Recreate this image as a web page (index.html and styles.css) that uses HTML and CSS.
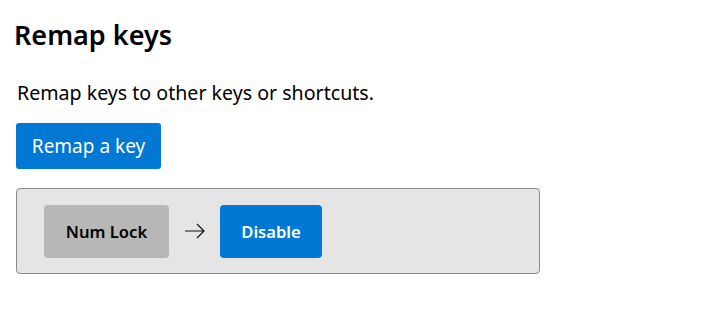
FILE: index.html
```html
<!DOCTYPE html>
<html lang="en">

<head>
    <meta charset="UTF-8">
    <meta name="viewport" content="width=device-width, initial-scale=1.0">
    <title>Remap keys</title>
    <link rel="stylesheet" href="styles.css">
</head>

<body>
    <div class="page">
        <h1 class="title">Remap keys</h1>
        <p class="desc">Remap keys to other keys or shortcuts.</p>
        <button class="btn-primary">Remap a key</button>

        <div class="mapping">
            <div class="key key-from">Num Lock</div>
            <div class="arrow">
                <svg width="22" height="16" viewBox="0 0 22 16">
                    <path d="M1 8 H20 M13 1 L20 8 L13 15" fill="none" stroke="#111" stroke-width="1.2" />
                </svg>
            </div>
            <div class="key key-to">Disable</div>
        </div>
    </div>
</body>

</html>
```

FILE: styles.css
```css
body {
    background-color: #FFFFFF;
    color: #000000;
    font-family: "Noto Sans", "Open Sans", sans-serif;
    margin: 0;
    padding: 0;
}

.page {
    padding: 16px 16px 0 16px;
}

.title {
    font-size: 27px;
    font-weight: 600;
    margin: 0 0 0 -2px;
    line-height: 38px;
}

.desc {
    font-size: 19.6px;
    margin: 26px 0 0 1px;
    line-height: 26px;
}

.btn-primary {
    display: block;
    background-color: #0078D4;
    color: #FFFFFF;
    border: none;
    border-radius: 3px;
    font-family: inherit;
    font-size: 19px;
    width: 145px;
    height: 46px;
    padding: 0;
    margin-top: 17px;
}

.mapping {
    display: flex;
    align-items: center;
    width: 524px;
    height: 86px;
    box-sizing: border-box;
    margin-top: 19px;
    padding: 0 27px;
    background-color: #E5E5E5;
    border: 1px solid #8A8A8A;
    border-radius: 4px;
}

.key {
    display: flex;
    align-items: center;
    justify-content: center;
    height: 53px;
    border-radius: 4px;
    font-size: 16.6px;
    font-weight: 600;
}

.key-from {
    width: 125px;
    background-color: #B7B7B7;
    color: #000000;
}

.key-to {
    width: 102px;
    background-color: #0078D4;
    color: #FFFFFF;
}

.arrow {
    width: 51px;
    display: flex;
    justify-content: center;
}
```
